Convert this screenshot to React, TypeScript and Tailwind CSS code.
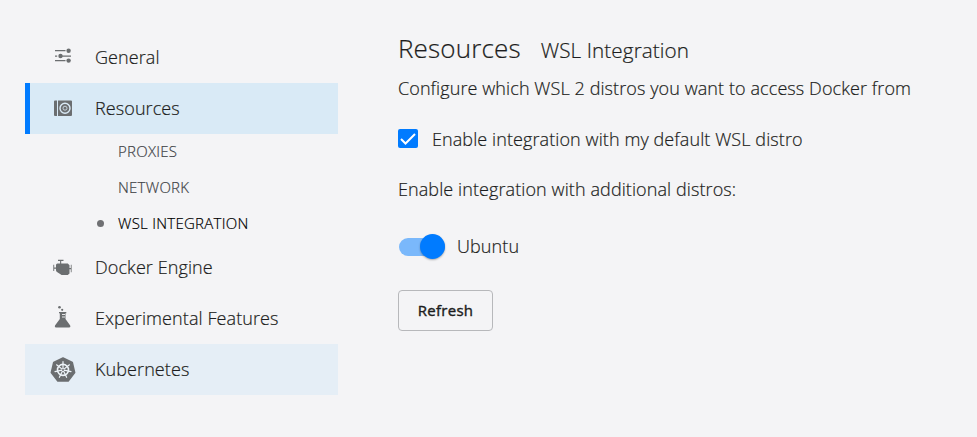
import React from 'react';

function Sliders() {
  return (
    <svg width="26" height="26" viewBox="0 0 26 26" fill="#6b6e70">
      <path d="M5 5h10.500v1.300H5zM5 10.400h2.200v1.300H5zM9 10.400h12v1.300H9zM5 15h10.500v1.300H5z" />
      <circle cx="18.600" cy="5.700" r="2.200" />
      <circle cx="10.500" cy="11" r="2.200" />
      <circle cx="18.600" cy="15.600" r="2.200" />
    </svg>
  );
}

function Disk() {
  return (
    <svg width="26" height="26" viewBox="0 0 26 26">
      <path d="M5 4.500h2v15.500h-2a1 1 0 0 1-1-1v-13.500a1 1 0 0 1 1-1zM8 4.500h13a1 1 0 0 1 1 1v13.500a1 1 0 0 1-1 1H8z" fill="#6b6e70" />
      <circle cx="15" cy="12.200" r="5" fill="none" stroke="#d9eaf6" strokeWidth="1.400" />
      <circle cx="15" cy="12.200" r="2" fill="none" stroke="#d9eaf6" strokeWidth="0.800" />
    </svg>
  );
}

function Engine() {
  return (
    <svg width="26" height="26" viewBox="0 0 26 26" fill="#6b6e70">
      <path d="M8 4.800h5.500v1.100h-2.300v2.600h6.600l1.700 1.800v2.700h1.300V9.800h.8v7.400h-.8v-3h-1.300v4.200l-1.700 1.600h-6.200l-4.600-3.100q-1-.6-1-1.700v-1.500H4.200V16H3.300V9.800h.9v2.800H6V10q0-1.500 1.500-1.500h2.600V5.900H8z" />
    </svg>
  );
}

function Flask() {
  return (
    <svg width="26" height="26" viewBox="0 0 26 26">
      <path d="M9 6h7.300v1.200h-.8V13l4.700 6.500q.8 2-1 2H6q-1.800 0-1-2L9.800 13V7.200H9z" fill="#6b6e70" />
      <path d="M12 8.500h3M12 11h3" stroke="#f4f4f6" strokeWidth=".9" />
      <circle cx="9.500" cy="1.300" r="1.300" fill="#6b6e70" />
      <circle cx="12.200" cy="3.800" r="1.100" fill="#6b6e70" />
    </svg>
  );
}

function Wheel() {
  return (
    <svg width="26" height="26" viewBox="0 0 26 26">
      <path d="M13 1l9.300 4.400 2.400 10.200-6.500 8.400H7.800L1.300 15.600 3.700 5.400z" fill="#6b6e70" stroke="#6b6e70" strokeWidth="1.500" strokeLinejoin="round" />
      <g stroke="#eef4f9" fill="none">
        <circle cx="13" cy="12.900" r="5.500" strokeWidth="1.600" />
        <path
          d="M13 12.900V4.700M13 12.900l6.400-5.100M13 12.900l8 1.800M13 12.900l3.600 7.400M13 12.900l-3.600 7.400M13 12.900l-8 1.800M13 12.900L6.600 7.800"
          strokeWidth="1.200"
          strokeLinecap="round"
        />
      </g>
      <circle cx="13" cy="12.900" r="1" fill="#6b6e70" />
    </svg>
  );
}

function NavItem({ icon, label, className = '' }: { icon: React.ReactNode; label: string; className?: string }) {
  return (
    <div className={`flex h-[51px] items-center ${className}`}>
      <div className="w-[45px] shrink-0">{icon}</div>
      <span>{label}</span>
    </div>
  );
}

function SubItem({ label, active = false }: { label: string; active?: boolean }) {
  return (
    <li className={`flex h-9 items-center text-[15px] tracking-[0.26px] ${active ? 'text-black' : 'text-[#414347]'}`}>
      <span className={`mr-[14px] mb-px ml-[72px] size-[7px] rounded-full ${active ? 'bg-[#6f7073]' : ''}`} />
      <span className="pb-0.5">{label}</span>
    </li>
  );
}

export default function App() {
  return (
    <div className="flex h-[437px] w-[977px] overflow-hidden bg-[#f4f4f6] font-['Open_Sans',sans-serif] text-[18px] font-light tracking-[0.09px] whitespace-nowrap text-[#1c1d20] [-webkit-text-stroke:0.2px]">
      <nav className="ml-[25px] w-[313px] pt-8">
        <NavItem icon={<Sliders />} label="General" className="pl-[25px]" />
        <NavItem icon={<Disk />} label="Resources" className="border-l-5 border-[#007bff] bg-[#d9eaf6] pl-5" />
        <ul>
          <SubItem label="PROXIES" />
          <SubItem label="NETWORK" />
          <SubItem label="WSL INTEGRATION" active />
        </ul>
        <NavItem icon={<Engine />} label="Docker Engine" className="pl-[25px]" />
        <NavItem icon={<Flask />} label="Experimental Features" className="pl-[25px]" />
        <NavItem icon={<Wheel />} label="Kubernetes" className="bg-[#e5eef6] pl-[25px]" />
      </nav>
      <main className="ml-[60px] pt-[30px]">
        <header className="flex h-9 items-baseline gap-5">
          <h1 className="text-[26px] leading-9 tracking-[0.15px]">Resources</h1>
          <h2 className="text-[20.7px] leading-9">WSL Integration</h2>
        </header>
        <p className="mt-[9px] leading-[27px]">Configure which WSL 2 distros you want to access Docker from</p>
        <label className="mt-6 flex h-[27px] items-center gap-[14px]">
          <span className="mb-0.5 flex h-[19px] w-5 items-center justify-center rounded-[2px] bg-[#007bff]">
            <svg width="16" height="14" viewBox="0 0 16 14" fill="none" stroke="#fff" strokeWidth="2">
              <path d="M1 7l4.500 4.500L15 2" />
            </svg>
          </span>
          Enable integration with my default WSL distro
        </label>
        <p className="mt-[23px] leading-[27px]">Enable integration with additional distros:</p>
        <div className="mt-[30px] flex h-[27px] items-center">
          <span className="mr-3 ml-px flex h-[18px] w-[46px] items-center justify-end rounded-full bg-[#7ab8fb]">
            <span className="size-[25px] rounded-full bg-[#007bff] shadow-[0_1px_2px_rgba(0,0,0,0.3)]" />
          </span>
          Ubuntu
        </div>
        <button className="mt-[30px] h-[41px] w-[95px] rounded-[4px] border border-[#b7b8bb] text-[15px] font-normal tracking-[0.3px] [-webkit-text-stroke:0.4px]">
          Refresh
        </button>
      </main>
    </div>
  );
}
